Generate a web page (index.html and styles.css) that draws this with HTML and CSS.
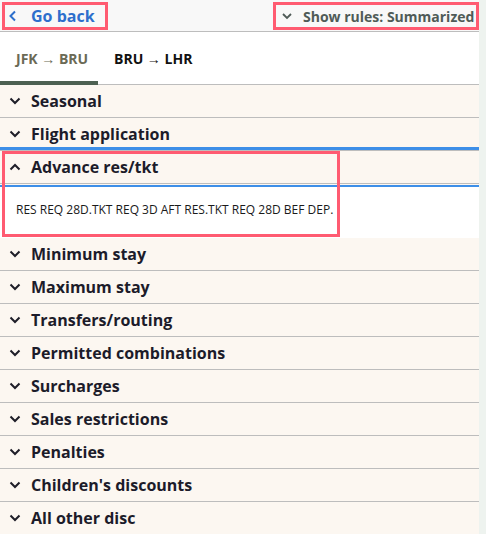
FILE: index.html
```html
<!DOCTYPE html>
<html>
<head>
<meta charset="utf-8">
<link rel="stylesheet" href="styles.css">
</head>
<body>
<div class="page">
  <header class="topbar">
    <button class="back mark">
      <svg class="ico" width="10" height="12" viewBox="0 0 10 12"><path d="M7 1.5 L2.5 6 L7 10.5" fill="none" stroke="#2d6fcc" stroke-width="2"/></svg>
      <span>Go back</span>
    </button>
    <button class="rules mark">
      <svg class="ico" width="10" height="10" viewBox="0 0 10 10"><path d="M1 3 L5 7 L9 3" fill="none" stroke="#4f5b57" stroke-width="1.8"/></svg>
      <span>Show rules: Summarized</span>
    </button>
  </header>
  <nav class="tabs">
    <div class="tab active">JFK → BRU</div>
    <div class="tab">BRU → LHR</div>
  </nav>
  <div class="list">
    <div class="row"><svg class="chev" width="12" height="10" viewBox="0 0 12 10"><path d="M1.5 2.5 L6 7 L10.5 2.5" fill="none" stroke="#1e1e28" stroke-width="2"/></svg><span>Seasonal</span></div>
    <div class="row before-open"><svg class="chev" width="12" height="10" viewBox="0 0 12 10"><path d="M1.5 2.5 L6 7 L10.5 2.5" fill="none" stroke="#1e1e28" stroke-width="2"/></svg><span>Flight application</span></div>
    <div class="open">
      <div class="row head"><svg class="chev" width="12" height="10" viewBox="0 0 12 10"><path d="M1.5 7.5 L6 3 L10.5 7.5" fill="none" stroke="#1e1e28" stroke-width="2"/></svg><span>Advance res/tkt</span></div>
      <div class="body">RES REQ 28D.TKT REQ 3D AFT RES.TKT REQ 28D BEF DEP.</div>
      <div class="annot"></div>
    </div>
    <div class="row"><svg class="chev" width="12" height="10" viewBox="0 0 12 10"><path d="M1.5 2.5 L6 7 L10.5 2.5" fill="none" stroke="#1e1e28" stroke-width="2"/></svg><span>Minimum stay</span></div>
    <div class="row"><svg class="chev" width="12" height="10" viewBox="0 0 12 10"><path d="M1.5 2.5 L6 7 L10.5 2.5" fill="none" stroke="#1e1e28" stroke-width="2"/></svg><span>Maximum stay</span></div>
    <div class="row"><svg class="chev" width="12" height="10" viewBox="0 0 12 10"><path d="M1.5 2.5 L6 7 L10.5 2.5" fill="none" stroke="#1e1e28" stroke-width="2"/></svg><span>Transfers/routing</span></div>
    <div class="row"><svg class="chev" width="12" height="10" viewBox="0 0 12 10"><path d="M1.5 2.5 L6 7 L10.5 2.5" fill="none" stroke="#1e1e28" stroke-width="2"/></svg><span>Permitted combinations</span></div>
    <div class="row"><svg class="chev" width="12" height="10" viewBox="0 0 12 10"><path d="M1.5 2.5 L6 7 L10.5 2.5" fill="none" stroke="#1e1e28" stroke-width="2"/></svg><span>Surcharges</span></div>
    <div class="row"><svg class="chev" width="12" height="10" viewBox="0 0 12 10"><path d="M1.5 2.5 L6 7 L10.5 2.5" fill="none" stroke="#1e1e28" stroke-width="2"/></svg><span>Sales restrictions</span></div>
    <div class="row"><svg class="chev" width="12" height="10" viewBox="0 0 12 10"><path d="M1.5 2.5 L6 7 L10.5 2.5" fill="none" stroke="#1e1e28" stroke-width="2"/></svg><span>Penalties</span></div>
    <div class="row"><svg class="chev" width="12" height="10" viewBox="0 0 12 10"><path d="M1.5 2.5 L6 7 L10.5 2.5" fill="none" stroke="#1e1e28" stroke-width="2"/></svg><span>Children's discounts</span></div>
    <div class="row"><svg class="chev" width="12" height="10" viewBox="0 0 12 10"><path d="M1.5 2.5 L6 7 L10.5 2.5" fill="none" stroke="#1e1e28" stroke-width="2"/></svg><span>All other disc</span></div>
  </div>
</div>
</body>
</html>
```
FILE: styles.css
```css
* { box-sizing: border-box; }
html, body { margin: 0; padding: 0; }
body {
  background: #eef3ef;
  font-family: "Open Sans", "Noto Sans", sans-serif;
  height: 534px;
  overflow: hidden;
}
.page {
  width: 479px;
  background: #fcf7f1;
  min-height: 534px;
}
.topbar {
  height: 32px;
  background: #f8f8f8;
  border-bottom: 1px solid #bdbdbd;
  display: flex;
  justify-content: space-between;
  align-items: flex-start;
  padding: 2px 0 0 2px;
}
.mark {
  border: 3px solid #ff5b71;
  background: transparent;
  height: 28px;
  display: flex;
  align-items: center;
  justify-content: flex-start;
  font-family: inherit;
  font-weight: 700;
  padding: 0;
  cursor: pointer;
  white-space: nowrap;
  overflow: visible;
}
.back {
  width: 106px;
  color: #2d6fcc;
  font-size: 16px;
  padding-left: 3px;
}
.back .ico { margin-right: 13px; }
.rules {
  width: 206px;
  color: #4f5b57;
  font-size: 14px;
  padding-left: 6px;
}
.rules .ico { margin-right: 11px; flex: none; }
.tabs {
  height: 53px;
  background: #fff;
  border-bottom: 1px solid #bdbdbd;
  display: flex;
}
.tab {
  height: 53px;
  margin-bottom: -1px;
  padding: 4px 16px 0;
  display: flex;
  align-items: center;
  font-size: 14px;
  font-weight: 700;
  color: #111;
  white-space: nowrap;
  border-bottom: 4px solid transparent;
}
.tab.active {
  width: 98px;
  color: #6b6a55;
  border-bottom-color: #4d6152;
}
.row {
  height: 33px;
  border-bottom: 1px solid #bdbdbd;
  display: flex;
  align-items: center;
  padding-left: 9px;
  font-size: 16px;
  font-weight: 700;
  color: #1c1c2a;
  white-space: nowrap;
}
.chev { margin-right: 10px; flex: none; }
.before-open { box-shadow: inset 0 -3px 0 #3d8fe8; }
.open { position: relative; }
.head { height: 33px; }
.body {
  margin-top: 1px;
  border-top: 2px solid #3d8fe8;
  background: #fff;
  height: 53px;
  padding: 14px 16px 0;
  font-size: 12px;
  color: #1a1a1a;
}
.open .body + .annot {
  position: absolute;
  left: 2px;
  top: 0;
  width: 338px;
  height: 86px;
  border: 3px solid #ff5b71;
  pointer-events: none;
}
```
